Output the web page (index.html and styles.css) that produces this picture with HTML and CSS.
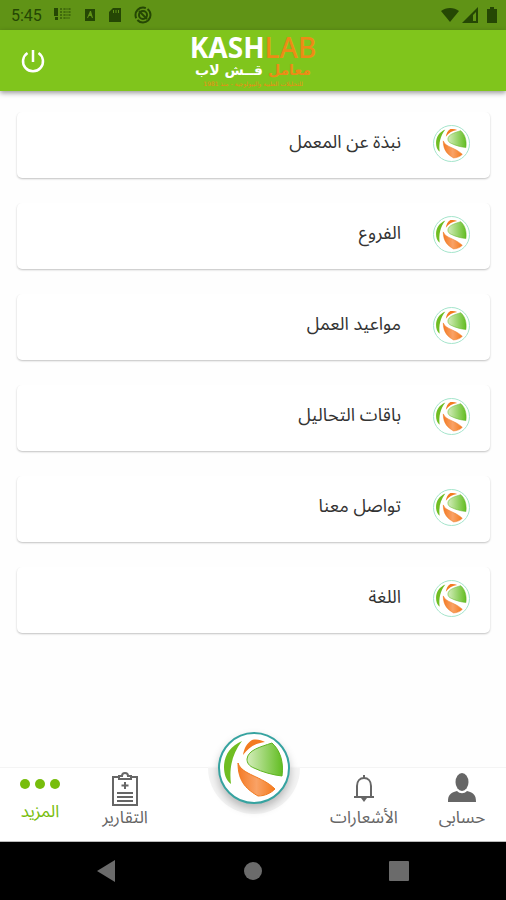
FILE: index.html
```html
<!DOCTYPE html>
<html lang="ar" dir="rtl">
<head>
<meta charset="utf-8">
<meta name="viewport" content="width=device-width, initial-scale=1">
<title>KASHLAB</title>
<link rel="stylesheet" href="styles.css">
</head>
<body>
<svg class="defs" aria-hidden="true">
  <defs>
    <linearGradient id="leaf" x1="0" x2="1"><stop offset="0" stop-color="#d4edbb"/><stop offset="1" stop-color="#62bd22"/></linearGradient>
    <linearGradient id="flame" x1="0" x2="1"><stop offset="0" stop-color="#f47a25"/><stop offset=".5" stop-color="#f9a266"/><stop offset="1" stop-color="#f47a1c"/></linearGradient>
    <symbol id="mark" viewBox="2 2 68 68">
      <path fill="#70bd22" d="M24 9C12 14 6 24 6 35c0 7 2 13 7 17-2-16 1-30 11-43z"/>
      <path fill="#f37b20" d="M25 23c1-7 4-12 9-15 5-1 9 0 13 2-9 1-16 5-22 13z"/>
      <path fill="url(#leaf)" stroke="#5fb522" d="M54 11c8 7 12 19 10 33-9-1-20-4-28-8-5-2-7-5-7-9 1-9 13-12 25-16z"/>
      <path fill="url(#flame)" stroke="#f07a20" d="M20 31c4 12 24 13 37 26-4 4-10 7-17 7-10-6-20-13-20-33z"/>
    </symbol>
  </defs>
</svg>
<div class="app">
  <div class="status" dir="ltr">
    <div class="status-left">
      <span class="clock">5:45</span>
      <svg width="18" height="16" viewBox="0 0 18 16"><path fill="currentColor" d="M0 1h4v8H0zM1 10h3v3H1z"/><path stroke="currentColor" opacity=".6" fill="none" stroke-dasharray="2 1" d="M6 2h11M6 5h11M6 8h11M6 11h9M7 1v12M11 1v12M15 1v11"/></svg>
      <svg width="12" height="16" viewBox="0 0 12 16"><path fill="currentColor" fill-rule="evenodd" d="M1 2h10v12H1zm5 2-3 7h1l1-2h2l1 2h1L7 4z"/></svg>
      <svg width="14" height="16" viewBox="0 0 14 16"><path fill="currentColor" d="M5 1h8v14H1V5z"/><path stroke="#5d9016" d="M5.500 3v3M8 3v3M10.500 3v3"/></svg>
      <svg width="18" height="18" viewBox="0 0 18 18" fill="none" stroke="currentColor" stroke-width="2"><circle cx="9" cy="9" r="7.500" stroke-dasharray="18 2"/><circle cx="9" cy="9" r="4"/><path d="m5 5 8 8"/></svg>
    </div>
    <div class="status-right">
      <svg width="18" height="16" viewBox="0 0 18 16"><path fill="currentColor" d="M0 4c5-4 13-4 18 0L9 15z"/></svg>
      <svg width="16" height="16" viewBox="0 0 16 16"><path fill="currentColor" fill-rule="evenodd" d="M16 0v16H0zm-2 5-3 3v6h3z"/></svg>
      <svg class="battery" width="10" height="16" viewBox="0 0 10 16"><path fill="currentColor" d="M3 0h4v2h3v14H0V2h3z"/></svg>
    </div>
  </div>
  <header class="bar" dir="ltr">
    <button class="power" type="button" aria-label="تسجيل الخروج">
      <svg width="24" height="24" viewBox="0 0 24 24" fill="none" stroke="#fff" stroke-width="2.500"><path d="M12 1v12M6.500 4a10 10 0 1 0 11 0"/></svg>
    </button>
    <div class="brand">
      <div class="brand-en">KASH<span>LAB</span></div>
      <div class="brand-ar" dir="rtl"><span>معامل</span> قــش لاب</div>
      <div class="brand-sub" dir="rtl">للتحليلات الطبية والبيولوجية - منذ 1981</div>
    </div>
  </header>
  <main class="list">
    <a class="card" href="#"><svg class="card-mark"><use href="#mark"/></svg><span>نبذة عن المعمل</span></a>
    <a class="card" href="#"><svg class="card-mark"><use href="#mark"/></svg><span>الفروع</span></a>
    <a class="card" href="#"><svg class="card-mark"><use href="#mark"/></svg><span>مواعيد العمل</span></a>
    <a class="card" href="#"><svg class="card-mark"><use href="#mark"/></svg><span>باقات التحاليل</span></a>
    <a class="card" href="#"><svg class="card-mark"><use href="#mark"/></svg><span>تواصل معنا</span></a>
    <a class="card" href="#"><svg class="card-mark"><use href="#mark"/></svg><span>اللغة</span></a>
  </main>
  <nav class="tabs">
    <a class="tab account" href="#">
      <svg width="28" height="34" viewBox="0 0 28 34"><ellipse cx="14" cy="10" rx="6.500" ry="9" fill="currentColor"/><path fill="currentColor" d="M0 30c0-7 2-9 9-11 3 3 7 3 10 0 7 2 9 4 9 11z"/></svg>
      <span>حسابى</span>
    </a>
    <a class="tab alerts" href="#">
      <svg width="22" height="34" viewBox="0 0 22 34" fill="none" stroke="currentColor" stroke-width="2"><path d="M1 25h20M4 25V14c0-5 3-8 7-8s7 3 7 8v11M11 3v3"/><path fill="currentColor" stroke="none" d="M8 26h6l-3 4z"/></svg>
      <span>الأشعارات</span>
    </a>
    <a class="home" href="#" aria-label="الرئيسية"><svg><use href="#mark"/></svg></a>
    <a class="tab reports" href="#">
      <svg width="26" height="34" viewBox="0 0 26 34" fill="none" stroke="currentColor" stroke-width="2"><path d="M7 5H1v28h24V5h-6M7 7V4h3c0-4 6-4 6 0h3v3z"/><path d="M13 10v7M9.500 13.500h7M5 21h16M5 25h16M5 29h16"/></svg>
      <span>التقارير</span>
    </a>
    <a class="tab more" href="#" aria-current="page">
      <svg width="40" height="28" viewBox="0 0 40 28" fill="currentColor"><circle cx="5" cy="12" r="5"/><circle cx="20" cy="12" r="5"/><circle cx="35" cy="12" r="5"/></svg>
      <span>المزيد</span>
    </a>
  </nav>
  <div class="system" dir="ltr">
    <button type="button" aria-label="رجوع"><svg width="20" height="22" viewBox="0 0 20 22"><path d="M19 0v22L1 11z"/></svg></button>
    <button type="button" aria-label="الشاشة الرئيسية"><svg width="20" height="20" viewBox="0 0 20 20"><circle cx="10" cy="10" r="9"/></svg></button>
    <button type="button" aria-label="التطبيقات"><svg width="20" height="20" viewBox="0 0 20 20"><rect width="20" height="20" rx="1"/></svg></button>
  </div>
</div>
</body>
</html>
```
FILE: styles.css
```css
* { box-sizing: border-box; }
body {
  margin: 0;
  background: #fefefe;
  color: #333;
  font-family: "Noto Sans Arabic", "Noto Naskh Arabic", "DejaVu Sans", sans-serif;
}
a { color: inherit; text-decoration: none; }
button { border: 0; padding: 0; background: none; }
svg { display: block; }
.defs { position: absolute; width: 0; height: 0; }
.app { display: flex; flex-direction: column; min-height: 100vh; }

.status {
  display: flex;
  justify-content: space-between;
  align-items: center;
  height: 30px;
  padding: 0 9px 0 11px;
  background: #609316;
  color: #254704;
}
.status-left { display: flex; align-items: center; gap: 12px; }
.status-right { display: flex; align-items: center; gap: 3px; }
.battery { margin-left: 6px; }
.clock { font: 16px Roboto, sans-serif; }

.bar {
  display: grid;
  grid-template-columns: 1fr auto 1fr;
  align-items: center;
  height: 61px;
  padding: 0 21px;
  background: #80c51c;
  box-shadow: 0 2px 5px rgba(0, 0, 0, .4);
}
.power { justify-self: start; }
.brand { color: #fff; text-align: center; }
.brand-en { font: bold 28px/28px "Noto Sans", sans-serif; }
.brand-en span { font-weight: 500; }
.brand-ar { font: bold 14px/18px "DejaVu Sans", sans-serif; }
.brand-sub { font: 6px/10px "DejaVu Sans", sans-serif; }
.brand span, .brand-sub { color: #ed8b16; }

.list {
  flex: 1;
  display: flex;
  flex-direction: column;
  gap: 25px;
  padding: 21px 16px 24px 17px;
}
.card {
  display: flex;
  align-items: center;
  gap: 32px;
  height: 66px;
  padding: 0 20px 4px;
  border-radius: 5px;
  background: #fff;
  box-shadow: 0 1px 2px rgba(0, 0, 0, .24);
  clip-path: inset(0 -3px -4px);
  font-size: 18px;
}
.card span { padding-bottom: 3px; }
.card-mark {
  width: 37px;
  height: 37px;
  border: 1px solid #a5e5cc;
  border-radius: 50%;
}

.tabs {
  display: grid;
  grid-template-columns: 88fr 108fr 112fr 28fr 90fr 80fr;
  height: 75px;
  border-top: 1px solid #f4f4f4;
  border-bottom: 1px solid #bbb;
  background: #fff;
  color: #666;
  font-size: 17px;
}
.tab {
  display: flex;
  flex-direction: column;
  align-items: center;
  padding-top: 4px;
  line-height: 24px;
  white-space: nowrap;
}
.reports { grid-column: 5; }
.more { grid-column: 6; color: #77bd0c; }
.home {
  justify-self: center;
  width: 92px;
  height: 92px;
  margin-top: -46px;
  padding: 10px;
  border-radius: 50%;
  background: linear-gradient(#fefefe 48%, #f4f4f4 50%);
}
.home svg {
  width: 72px;
  height: 72px;
  border: 2px solid #36a3a0;
  border-radius: 50%;
  background: #fff;
  box-shadow: 0 5px 9px rgba(0, 0, 0, .25);
}

.system {
  display: flex;
  justify-content: space-between;
  align-items: center;
  height: 58px;
  padding: 0 97px 0 96px;
  background: #000;
}
.system svg { fill: #6b6b6b; }
```
